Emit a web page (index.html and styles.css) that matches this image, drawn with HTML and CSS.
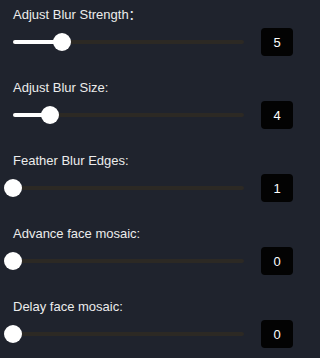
FILE: index.html
```html
<!DOCTYPE html>
<html>
<head>
<meta charset="utf-8">
<link rel="stylesheet" href="styles.css">
</head>
<body>
<div class="panel">
  <div class="row">
    <div class="label">Adjust Blur Strength：</div>
    <div class="control">
      <div class="slider">
        <div class="track"><div class="fill" style="width:21.2%"></div></div>
        <div class="thumb" style="left:21.2%"></div>
      </div>
      <div class="value">5</div>
    </div>
  </div>
  <div class="row">
    <div class="label">Adjust Blur Size:</div>
    <div class="control">
      <div class="slider">
        <div class="track"><div class="fill" style="width:16%"></div></div>
        <div class="thumb" style="left:16%"></div>
      </div>
      <div class="value">4</div>
    </div>
  </div>
  <div class="row">
    <div class="label">Feather Blur Edges:</div>
    <div class="control">
      <div class="slider">
        <div class="track"><div class="fill" style="width:0%"></div></div>
        <div class="thumb" style="left:0%"></div>
      </div>
      <div class="value">1</div>
    </div>
  </div>
  <div class="row">
    <div class="label">Advance face mosaic:</div>
    <div class="control">
      <div class="slider">
        <div class="track"><div class="fill" style="width:0%"></div></div>
        <div class="thumb" style="left:0%"></div>
      </div>
      <div class="value">0</div>
    </div>
  </div>
  <div class="row">
    <div class="label">Delay face mosaic:</div>
    <div class="control">
      <div class="slider">
        <div class="track"><div class="fill" style="width:0%"></div></div>
        <div class="thumb" style="left:0%"></div>
      </div>
      <div class="value">0</div>
    </div>
  </div>
</div>
</body>
</html>
```

FILE: styles.css
```css
html, body {
  margin: 0;
  padding: 0;
  background: #1f232d;
}
body {
  width: 300px;
  height: 358px;
  overflow: hidden;
  font-family: "Liberation Sans", "Noto Sans CJK SC", sans-serif;
  color: #ececec;
}
.panel {
  display: flex;
  flex-direction: column;
  gap: 23px;
  padding: 6px 7px 0 13px;
}
.row {
  display: flex;
  flex-direction: column;
  gap: 4px;
}
.label {
  font-size: 13px;
  line-height: 18px;
  height: 18px;
}
.control {
  display: flex;
  align-items: center;
  height: 28px;
}
.slider {
  position: relative;
  flex: 1;
  height: 18px;
  margin-right: 17px;
  display: flex;
  align-items: center;
}
.track {
  width: 100%;
  height: 4px;
  background: #2c2924;
  border-radius: 2px;
}
.fill {
  height: 100%;
  background: #ffffff;
  border-radius: 2px;
}
.thumb {
  position: absolute;
  top: 0;
  width: 18px;
  height: 18px;
  margin-left: -9px;
  border-radius: 50%;
  background: #ffffff;
}
.value {
  width: 32px;
  height: 28px;
  border-radius: 4px;
  background: #030303;
  color: #ffffff;
  font-size: 13px;
  display: flex;
  align-items: center;
  justify-content: center;
}
```
